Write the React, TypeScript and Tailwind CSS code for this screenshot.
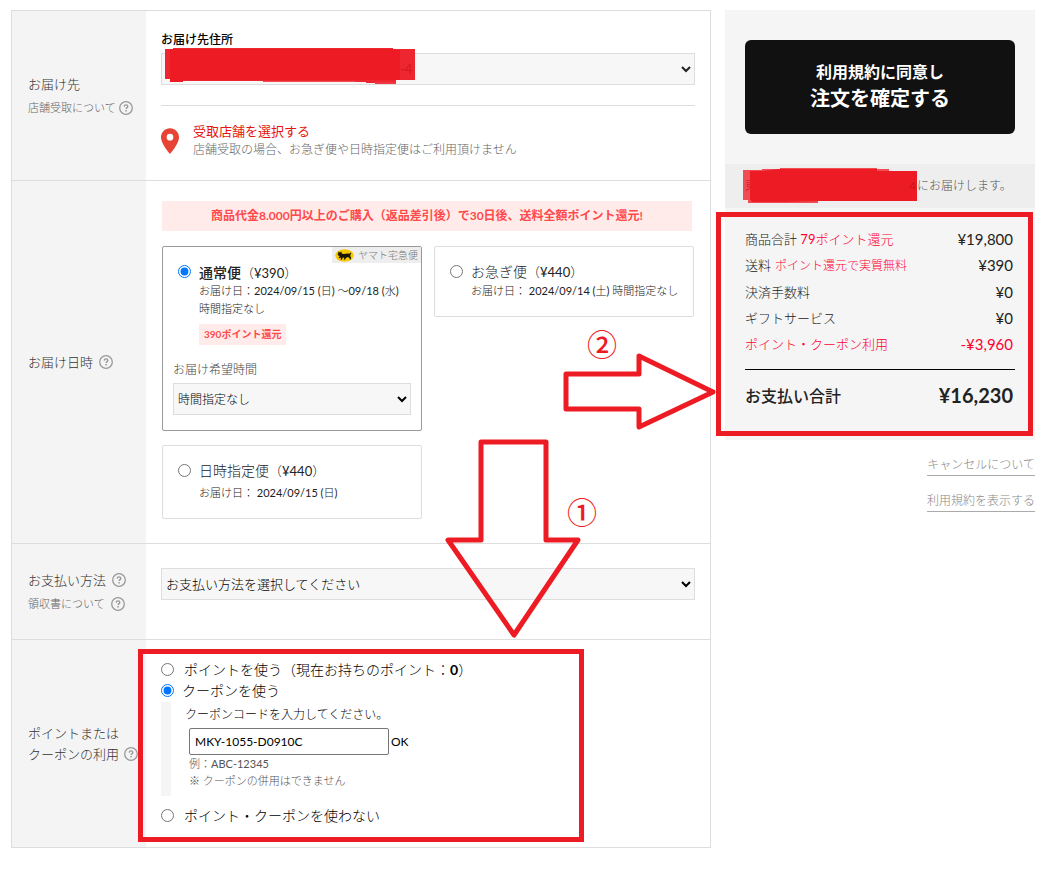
import { useState, type ReactNode } from "react";

function HelpIcon() {
  return (
    <svg viewBox="0 0 14 14" className="h-3.5 w-3.5 shrink-0" fill="none" stroke="#999" aria-hidden="true">
      <circle cx="7" cy="7" r="6.3" strokeWidth="1.3" />
      <path d="M5.2 5.6c.1-1 .8-1.7 1.8-1.7s1.8.6 1.8 1.5c0 1.2-1.7 1.2-1.7 2.6" strokeWidth="1.4" />
      <path d="M7.1 9.1v1.4" strokeWidth="1.5" />
    </svg>
  );
}

function YamatoLogo() {
  return (
    <svg viewBox="0 0 19 13" className="h-[13px] w-[19px] shrink-0" aria-hidden="true">
      <ellipse cx="9.5" cy="6.5" rx="9.2" ry="6.2" fill="#f5c800" />
      <path
        d="M3 2.4l1.2.8h1.2l1-.8.3 2 1.9.5 4.2-.5 1.8.4.8-1.3.8.4-.6 1.7-.5 1.4 1 1.5-.3 2-1 .1-.3-1.6-1.6-1-1.9 1-1.3 1.7-1-.1.6-1.9-1.5-.2-1 2.3-1.1-.1.3-2.3-1.6.9-.8-.7 1.3-1.6-1.7-.6-.5-1.5.8-.8z"
        fill="#1a1500"
      />
    </svg>
  );
}

function Row({ label, children, className }: { label: ReactNode; children: ReactNode; className: string }) {
  return (
    <section className="flex border-b border-[#ddd]">
      <div className="flex w-[134px] shrink-0 flex-col justify-center bg-[#f4f4f4] pl-4 text-[13px] text-[#333]">
        {label}
      </div>
      <div className={`min-w-0 flex-1 px-[15px] ${className}`}>{children}</div>
    </section>
  );
}

function ShippingCard({
  name,
  price,
  selected,
  onSelect,
  bold,
  tag,
  footer,
  children,
}: {
  name: string;
  price: string;
  selected: boolean;
  onSelect: () => void;
  bold?: boolean;
  tag?: ReactNode;
  footer?: ReactNode;
  children: ReactNode;
}) {
  return (
    <div
      className={`relative rounded-xs border pt-[15px] ${footer ? "pb-[15px]" : "pb-4"} ${
        selected ? "border-[#999]" : "border-[#ddd]"
      }`}
    >
      {tag}
      <label className="flex gap-2 pl-[15px] text-[#222]">
        <input
          type="radio"
          name="shipping"
          checked={selected}
          onChange={onSelect}
          className="mt-[3px] h-[13px] w-[13px] shrink-0"
        />
        <span className="block">
          <span className="block h-5 text-[13px] leading-5">
            <span
              className={
                bold
                  ? "font-['Noto_Sans_CJK_JP',sans-serif] text-sm leading-5 font-medium"
                  : "text-sm leading-5"
              }
            >
              {name}
            </span>
            （{price}）
          </span>
          <span className="block text-[11px] leading-[18px]">{children}</span>
        </span>
      </label>
      {footer}
    </div>
  );
}

function SummaryRow({ label, note, amount, red }: { label: string; note?: ReactNode; amount: string; red?: boolean }) {
  return (
    <div className={`flex justify-between pr-0.5 text-[13px] leading-[26px] ${red ? "text-[#ff0033]" : "text-[#222]"}`}>
      <dt className="whitespace-nowrap">
        {label}
        {note}
      </dt>
      <dd className="text-[15px] leading-[26px]">{amount}</dd>
    </div>
  );
}

export default function App() {
  const [shipping, setShipping] = useState("normal");
  const [benefit, setBenefit] = useState("coupon");
  const [code, setCode] = useState("MKY-1055-D0910C");

  return (
    <div className="relative flex items-start gap-3.5 bg-white pt-2.5 pr-[13px] pb-[22px] pl-[11px] font-['Lato','Noto_Sans_CJK_JP_Light','Noto_Sans_CJK_JP',sans-serif] text-[#222]">
      <main className="min-w-0 flex-1 border border-b-0 border-[#ddd]">
        <Row
          className="pt-[18px] pb-5"
          label={
            <>
              <p className="leading-6">お届け先</p>
              <a href="#store" className="flex items-center gap-[3px] text-[11px] leading-6 text-[#666]">
                店舗受取について
                <HelpIcon />
              </a>
            </>
          }
        >
          <label
            htmlFor="address"
            className="block font-['Noto_Sans_CJK_JP',sans-serif] text-xs leading-5 font-medium text-black"
          >
            お届け先住所
          </label>
          <div className="relative mt-1">
            <select id="address" className="block h-8 w-full border border-[#ddd] bg-[#f7f7f7] px-1 text-[13px]">
              <option></option>
            </select>
            <svg viewBox="0 0 256 38" className="absolute -top-1.5 left-1 h-[38px] w-64" aria-hidden="true">
              <path d="M0 2H8V1H228V2H250V33H231V37H210V36H201V35H98V34H18V35H5V32H0Z" fill="#ed2630" />
              <path d="M5 2H228V3H235V33H18V35H5Z" fill="#ed1c24" />
              <path d="M98 34.5H190M210 36H231" stroke="#f04c54" />
              <text x="235" y="27" fontSize="13" fill="#d9171f">-4</text>
            </svg>
          </div>
          <div className="mt-5 flex gap-3.5 border-t border-[#ddd] pt-4">
            <svg viewBox="5 2 14 20" className="mt-1.5 h-[26px] w-[18px] shrink-0" aria-hidden="true">
              <path
                d="M12 2C8.13 2 5 5.13 5 9c0 5.25 7 13 7 13s7-7.75 7-13c0-3.87-3.13-7-7-7zm0 9.6a2.6 2.6 0 1 1 0-5.2 2.6 2.6 0 0 1 0 5.2z"
                fill="#e64335"
              />
            </svg>
            <div>
              <a
                href="#pickup"
                className="block font-['Noto_Sans_CJK_JP',sans-serif] text-[13px] leading-[18px] text-[#e5140f]"
              >
                受取店舗を選択する
              </a>
              <p className="text-xs leading-5 text-[#666]">店舗受取の場合、お急ぎ便や日時指定便はご利用頂けません</p>
            </div>
          </div>
        </Row>

        <Row
          className="pt-5 pb-6"
          label={
            <p className="flex items-center gap-1.5 leading-6">
              お届け日時
              <HelpIcon />
            </p>
          }
        >
          <p className="mr-[3px] ml-px bg-[#ffecea] text-center font-['Lato','Noto_Sans_CJK_JP',sans-serif] text-xs leading-[30px] font-bold text-[#ff4a4a]">
            商品代金8.000円以上のご購入（返品差引後）で30日後、送料全額ポイント還元!
          </p>
          <div className="mt-[15px] grid grid-cols-2 items-start gap-x-3 gap-y-3.5 px-px">
            <ShippingCard
              name="通常便"
              price="¥390"
              bold
              selected={shipping === "normal"}
              onSelect={() => setShipping("normal")}
              tag={
                <span className="absolute top-0 right-0 flex h-4 items-center gap-1 bg-[#eee] px-[3px] text-[10px] text-[#777]">
                  <YamatoLogo />
                  ヤマト宅急便
                </span>
              }
              footer={
                <div className="px-2.5 pt-[15px]">
                  <label htmlFor="time" className="block text-xs leading-5 text-[#444]">
                    お届け希望時間
                  </label>
                  <select
                    id="time"
                    className="mt-[3px] block h-8 w-full border border-[#ddd] bg-[#f7f7f7] text-xs text-black"
                  >
                    <option>時間指定なし</option>
                  </select>
                </div>
              }
            >
              お届け日：2024/09/15 (日) ～09/18 (水)
              <br />
              時間指定なし
              <span className="mt-1.5 block w-fit bg-[#ffecea] px-[5px] font-['Lato','Noto_Sans_CJK_JP',sans-serif] text-[10px] leading-[21px] font-bold text-[#ff4a4a]">
                390ポイント還元
              </span>
            </ShippingCard>
            <ShippingCard
              name="お急ぎ便"
              price="¥440"
              selected={shipping === "fast"}
              onSelect={() => setShipping("fast")}
            >
              お届け日： 2024/09/14 (土) 時間指定なし
            </ShippingCard>
            <ShippingCard
              name="日時指定便"
              price="¥440"
              selected={shipping === "timed"}
              onSelect={() => setShipping("timed")}
            >
              <span className="block pt-[3px]">お届け日： 2024/09/15 (日)</span>
            </ShippingCard>
          </div>
        </Row>

        <Row
          className="pt-6 pb-[39px]"
          label={
            <>
              <p className="flex items-center gap-1.5 leading-6">
                お支払い方法
                <HelpIcon />
              </p>
              <a href="#receipt" className="flex items-center gap-1.5 text-[11px] leading-6 text-[#666]">
                領収書について
                <HelpIcon />
              </a>
            </>
          }
        >
          <select
            aria-label="お支払い方法"
            className="block h-8 w-full border border-[#ddd] bg-[#f7f7f7] text-[13px] text-black"
          >
            <option>お支払い方法を選択してください</option>
          </select>
        </Row>

        <Row
          className="pt-[19px] pb-[21px]"
          label={
            <>
              <p className="leading-[21px]">ポイントまたは</p>
              <p className="flex items-center gap-[5px] leading-[21px] whitespace-nowrap">
                クーポンの利用
                <HelpIcon />
              </p>
            </>
          }
        >
          <div className="relative text-sm leading-[21px] text-black">
            <label className="flex items-center gap-2.5">
              <input
                type="radio"
                name="benefit"
                checked={benefit === "point"}
                onChange={() => setBenefit("point")}
                className="h-[13px] w-[13px]"
              />
              <span>
                ポイントを使う（現在お持ちのポイント：<b>0</b>）
              </span>
            </label>
            <label className="flex items-center gap-2">
              <input
                type="radio"
                name="benefit"
                checked={benefit === "coupon"}
                onChange={() => setBenefit("coupon")}
                className="h-[13px] w-[13px]"
              />
              クーポンを使う
            </label>
            <div className="mt-px border-l-10 border-[#f5f5f5] pt-1 pb-[7px] pl-3.5">
              <label htmlFor="coupon" className="block text-xs leading-[18px]">
                クーポンコードを入力してください。
              </label>
              <div className="mt-1 flex items-center gap-0.5 pl-1 text-xs">
                <input
                  id="coupon"
                  value={code}
                  onChange={(e) => setCode(e.target.value)}
                  className="h-[27px] w-[200px] rounded-xs border border-[#767676] bg-white px-[5px]"
                />
                OK
              </div>
              <p className="pl-1 text-[11px] leading-[17px] text-[#555]">例：ABC-12345</p>
              <p className="pl-1 text-[11px] leading-[17px] text-[#555]">※ クーポンの併用はできません</p>
            </div>
            <label className="mt-[9px] flex items-center gap-2.5">
              <input
                type="radio"
                name="benefit"
                checked={benefit === "none"}
                onChange={() => setBenefit("none")}
                className="h-[13px] w-[13px]"
              />
              ポイント・クーポンを使わない
            </label>
            <div className="pointer-events-none absolute -top-2.5 -bottom-4 -left-[23px] w-[446px] border-5 border-[#ed1c24]" />
          </div>
        </Row>
      </main>

      <aside className="w-[310px] shrink-0">
        <div className="bg-[#f5f5f5] pt-[30px] pb-[31px]">
          <div className="px-5">
            <button
              type="button"
              className="h-[94px] w-full rounded-md bg-[#111] pb-0.5 font-['Noto_Sans_CJK_JP',sans-serif] font-bold text-white"
            >
              <span className="block text-base leading-6">利用規約に同意し</span>
              <span className="block text-xl leading-[30px]">注文を確定する</span>
            </button>
          </div>
          <div className="relative mt-[30px] bg-[#eee] pl-48 text-xs leading-[44px] text-[#555]">
            にお届けします。
            <svg viewBox="0 0 176 36" className="absolute top-1 left-[18px] h-9 w-44" aria-hidden="true">
              <path d="M0 2H19V1H37V0H134V1H146V3H174V33H75V35H5V32H0Z" fill="#f04c54" />
              <text x="2" y="22" fontSize="12" fill="#c8141c">東</text>
              <path d="M7 3H19L37 1H134V3H174V33H75L42 34H9L7 31Z" fill="#ed1c24" />
              <text x="166" y="22" fontSize="12" fill="#d0141c">4</text>
            </svg>
          </div>
          <div className="relative px-5 pt-[18px]">
            <dl>
              <SummaryRow
                label="商品合計"
                note={<span className="text-[#ff0033]"> 79ポイント還元</span>}
                amount="¥19,800"
              />
              <SummaryRow
                label="送料"
                note={<span className="pl-1 text-xs leading-[26px] text-[#ff0033]">ポイント還元で実質無料</span>}
                amount="¥390"
              />
              <SummaryRow label="決済手数料" amount="¥0" />
              <SummaryRow label="ギフトサービス" amount="¥0" />
              <SummaryRow label="ポイント・クーポン利用" amount="-¥3,960" red />
              <div className="mt-3 flex justify-between border-t border-black pt-[11px] pr-0.5 leading-7">
                <dt className="font-['Noto_Sans_CJK_JP',sans-serif] text-base leading-7 font-medium">お支払い合計</dt>
                <dd className="text-xl leading-7 font-bold">¥16,230</dd>
              </div>
            </dl>
            <div className="pointer-events-none absolute top-1 right-0.5 -bottom-[27px] -left-[9px] border-5 border-[#ed1c24]" />
          </div>
        </div>
        <nav className="mt-[15px] flex flex-col items-end gap-[15px] text-xs text-[#888]">
          <a href="#cancel" className="border-b border-[#aaa] leading-5">
            キャンセルについて
          </a>
          <a href="#terms" className="border-b border-[#aaa] leading-5">
            利用規約を表示する
          </a>
        </nav>
      </aside>

      {/* step arrows drawn over the form */}
      <svg
        viewBox="0 0 280 290"
        className="pointer-events-none absolute top-[350px] left-[440px] h-[290px] w-[280px]"
        fill="none"
        stroke="#ed1c24"
        strokeWidth="5"
        strokeLinejoin="round"
        aria-hidden="true"
      >
        <path d="M126 24H199V6L273 42L199 77V59H126Z" />
        <path d="M41 92H106V190H138L74 285L8 190H41Z" />
      </svg>
      <span className="absolute top-[323px] left-[587px] font-['Noto_Sans_CJK_JP',sans-serif] text-3xl leading-10 font-medium text-[#ed1c24]">
        ②
      </span>
      <span className="absolute top-[491px] left-[567px] font-['Noto_Sans_CJK_JP',sans-serif] text-3xl leading-10 font-medium text-[#ed1c24]">
        ①
      </span>
    </div>
  );
}
